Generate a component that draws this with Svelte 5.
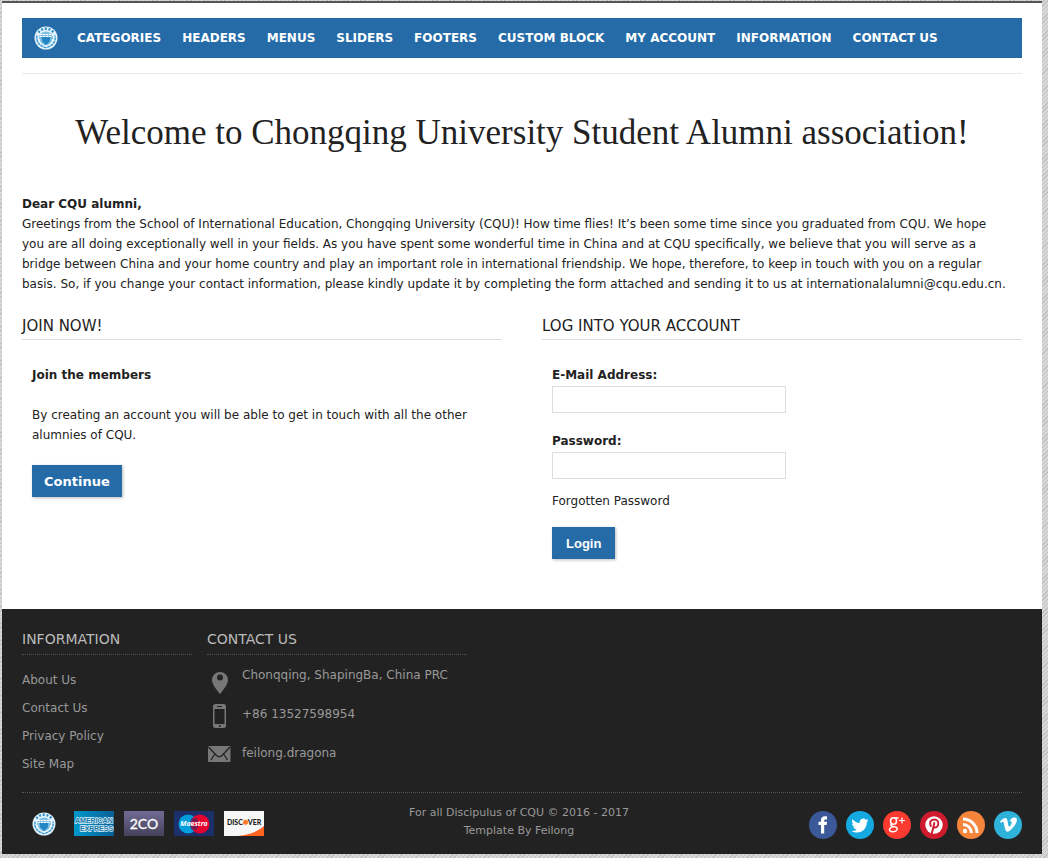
<script>
  const menu = ['Categories', 'Headers', 'Menus', 'Sliders', 'Footers', 'Custom Block', 'My Account', 'Information', 'Contact Us'];
  const links = ['About Us', 'Contact Us', 'Privacy Policy', 'Site Map'];
</script>

{#snippet crest()}
  <svg class="crest" viewBox="0 0 24 24" role="img" aria-label="CQU">
    <circle cx="12" cy="12" r="11.5" fill="#e4f3fb" />
    <path d="M4.500 6.500A9.300 9.300 0 0 1 19.500 6.500" fill="none" stroke="#2c8ecb" stroke-width="2.400" stroke-dasharray="2 1.700" />
    <path d="M3 9.500Q1.500 19 12 21.500Q22.500 19 21 9.500" fill="none" stroke="#3c9bd2" stroke-width="1.500" stroke-dasharray="3 .6" />
    <circle cx="12" cy="12.500" r="7" fill="#7fc0e4" />
    <path d="M6 8.500h12M6 10.500h12" stroke="#fff" stroke-width="1" stroke-dasharray="2.400 .6" />
    <path d="M7.500 11h9l-.8 4.500-3.700 3.500-3.700-3.500z" fill="#2387c5" />
    <path d="M5 13q1 5 7 7.500q6-2.500 7-7.500" fill="none" stroke="#fff" stroke-width="1" />
  </svg>
{/snippet}

<div class="page">
  <header>
    <nav aria-label="Main">
      <a class="home" href="#home">{@render crest()}</a>
      {#each menu as item}
        <a href="#menu">{item}</a>
      {/each}
    </nav>
  </header>

  <main>
    <h1>Welcome to Chongqing University Student Alumni association!</h1>
    <section class="letter">
      <strong>Dear CQU alumni,</strong>
      <p>Greetings from the School of International Education, Chongqing University (CQU)! How time flies! It’s been some time since you graduated from CQU. We hope you are all doing exceptionally well in your fields. As you have spent some wonderful time in China and at CQU specifically, we believe that you will serve as a bridge between China and your home country and play an important role in international friendship. We hope, therefore, to keep in touch with you on a regular basis. So, if you change your contact information, please kindly update it by completing the form attached and sending it to us at internationalalumni@cqu.edu.cn.</p>
    </section>

    <div class="columns">
      <section>
        <h2>Join now!</h2>
        <div class="box">
          <strong>Join the members</strong>
          <p class="about">By creating an account you will be able to get in touch with all the other alumnies of CQU.</p>
          <button type="button" class="continue">Continue</button>
        </div>
      </section>
      <section>
        <h2>Log into your account</h2>
        <form class="box" onsubmit={(e) => e.preventDefault()}>
          <label for="email">E-Mail Address:</label>
          <input id="email" type="email" />
          <label for="password">Password:</label>
          <input id="password" type="password" />
          <a class="forgotten" href="#forgotten">Forgotten Password</a>
          <button type="submit" class="login">Login</button>
        </form>
      </section>
    </div>
  </main>

  <footer>
    <div class="footer-columns">
      <section class="info">
        <h3>Information</h3>
        <ul>
          {#each links as link}
            <li><a href="#info">{link}</a></li>
          {/each}
        </ul>
      </section>
      <section class="contact">
        <h3>Contact Us</h3>
        <ul>
          <li class="address">
            <svg viewBox="0 0 24 24"><path fill-rule="evenodd" d="M13 1a8 8 0 0 0-8 8c0 4 4 9 8 14 4-5 8-10 8-14a8 8 0 0 0-8-8zm0 2.500a3 3 0 1 1 0 6 3 3 0 0 1 0-6z" /></svg>
            <span>Chonqqing, ShapingBa, China PRC</span>
          </li>
          <li>
            <svg viewBox="0 0 24 24"><path fill-rule="evenodd" d="M8.500 0h8a2.500 2.500 0 0 1 2.500 2.500v19a2.500 2.500 0 0 1-2.500 2.500h-8a2.500 2.500 0 0 1-2.500-2.500v-19a2.500 2.500 0 0 1 2.500-2.500zM7.500 5v15h10v-15zM10 2v1h5v-1zM12 21v2h1.500v-2z" /></svg>
            <span>+86 13527598954</span>
          </li>
          <li>
            <svg viewBox="0 0 24 24"><rect x="1" y="3" width="22.500" height="16" rx="1" /><path d="M1.500 4l8 8.500q2.700 2.500 5.500 0L23 4M4 17l3.500-5.500M20.500 17l-3.500-5.500" fill="none" stroke="#222" stroke-width="1.300" /></svg>
            <span>feilong.dragona</span>
          </li>
        </ul>
      </section>
    </div>

    <div class="bottom">
      <div class="payments">
        <span class="seal">{@render crest()}</span>
        <svg viewBox="0 0 40 25" role="img" aria-label="American Express">
          <defs><linearGradient id="amex" x2="1" y2="0"><stop stop-color="#0098cb" /><stop offset="1" stop-color="#075e96" /></linearGradient></defs>
          <rect width="40" height="25" fill="url(#amex)" />
          <g font-family="Liberation Sans" font-weight="700" font-size="7" fill="#1678aa" stroke="#d8edf7" stroke-width="1.400" paint-order="stroke">
            <text x="1" y="12">AMERICAN</text><text x="6" y="20">EXPRESS</text>
          </g>
        </svg>
        <svg viewBox="0 0 40 25" role="img" aria-label="2CO">
          <defs><linearGradient id="co" x2="0" y2="1"><stop stop-color="#716b94" /><stop offset="1" stop-color="#44425b" /></linearGradient></defs>
          <rect width="40" height="25" fill="url(#co)" />
          <text x="20" y="18" text-anchor="middle" font-family="Lato" font-size="14" fill="#fff" stroke="#fff" stroke-width=".3">2CO</text>
        </svg>
        <svg viewBox="0 0 40 25" role="img" aria-label="Maestro">
          <rect width="40" height="25" fill="#1b2f6b" />
          <circle cx="14" cy="13" r="9.500" fill="#009ddc" /><circle cx="26" cy="13" r="9.500" fill="#e4002f" />
          <path d="M17 8h6M16 10h8M16 16h8M17 18h6" stroke="#1b3471" />
          <text x="20" y="15" text-anchor="middle" font-family="Open Sans" font-style="italic" font-weight="700" font-size="7" fill="#fff">Maestro</text>
        </svg>
        <svg viewBox="0 0 40 25" role="img" aria-label="Discover">
          <rect width="40" height="25" fill="#f7f7f7" />
          <path d="M14 25q18-2 26-10v10z" fill="#ff6320" />
          <circle cx="21.500" cy="11.300" r="2.500" fill="#ff7a22" />
          <g font-family="Lato" font-weight="900" font-size="7" fill="#222"><text x="18.800" y="14" text-anchor="end">DISC</text><text x="23.800" y="14">VER</text></g>
        </svg>
      </div>

      <div class="credits">For all Discipulus of CQU © 2016 - 2017<br />Template By Feilong</div>

      <div class="social">
        <a href="#facebook" aria-label="Facebook"><svg viewBox="0 0 28 28"><circle cx="14" cy="14" r="14" fill="#3b5999" /><path fill="#fff" d="M12 22.500v-8.500h-2.500v-3.300h2.500v-1.500c0-3 1.500-4 4-4h2v3.300h-1.300c-1.200 0-1.500.5-1.500 1.300v.9h2.800l-.4 3.300h-2.400v8.500z" /></svg></a>
        <a href="#twitter" aria-label="Twitter"><svg viewBox="0 0 28 28"><circle cx="14" cy="14" r="14" fill="#14a9e0" /><path fill="#fff" d="M22.500 9.300a7 7 0 0 1-2 .5 3.500 3.500 0 0 0 1.500-1.900 7 7 0 0 1-2.200.9 3.500 3.500 0 0 0-6 3.200 10 10 0 0 1-7.200-3.700 3.500 3.500 0 0 0 1.100 4.700 3.500 3.500 0 0 1-1.600-.4 3.500 3.500 0 0 0 2.800 3.500 3.500 3.500 0 0 1-1.600 0 3.500 3.500 0 0 0 3.300 2.400A7 7 0 0 1 5.500 20c8 4.500 15.500-1 15.300-8.900a7 7 0 0 0 1.700-1.800z" /></svg></a>
        <a href="#google" aria-label="Google Plus"><svg viewBox="0 0 28 28"><circle cx="14" cy="14" r="14" fill="#fb3b30" /><g fill="none" stroke="#fff" stroke-width="1.500"><ellipse cx="10.500" cy="10" rx="3" ry="3.300" /><path d="M11.500 6.900h4M8.500 12.800q-2 2 1.500 2.700c4 .4 4.500 1.500 4 3.300-1.200 3-8 2.400-7.500-.4 0-1.700 2-2.400 3.500-2.800" /><path d="M19 6.500v6M16 9.500h6" stroke-width="1.200" /></g></svg></a>
        <a href="#pinterest" aria-label="Pinterest"><svg viewBox="0 0 28 28"><circle cx="14" cy="14" r="14" fill="#cf1b2d" /><circle cx="14" cy="14" r="8.700" fill="#fff" /><path fill="none" stroke="#cf1b2d" stroke-width="1.900" stroke-linecap="round" d="M10.800 15c-2-5 1-6.500 3.700-6.500 5.300 0 4.500 8 .7 8-1.200 0-1.900-.6-1.900-.6M14.300 12l-2.500 10.500" /></svg></a>
        <a href="#rss" aria-label="RSS"><svg viewBox="0 0 28 28"><circle cx="14" cy="14" r="14" fill="#f5853a" /><circle cx="8" cy="20" r="2.200" fill="#fff" /><path d="M6 13.500a8.500 8.500 0 0 1 8.500 8.500M6 8a14 14 0 0 1 14 14" fill="none" stroke="#fff" stroke-width="3" /></svg></a>
        <a href="#vimeo" aria-label="Vimeo"><svg viewBox="0 0 28 28"><circle cx="14" cy="14" r="14" fill="#2fb2d9" /><path fill="#fff" d="M6 10.500C8 8.500 10 7 11.200 7c3.200-.2 2.500 8.500 4 8.800.8 0 2.600-3 2.500-4.300-.1-1.200-1-1.300-2-1 1-3 3-4.200 5-3.900 5.500.8-.4 9.700-5 13.200-2 1.500-3.500 1-4.300-1C10.500 16.500 10 11 9 10.800c-.5-.1-1.300.7-2 1.200z" /></svg></a>
      </div>
    </div>
  </footer>
</div>

<style>
  :global(body) {
    background: #ccc repeating-linear-gradient(135deg, #c0c0c0 0 1px, #d8d8d8 1px 3px);
    font: 12px/20px "DejaVu Sans", Verdana, sans-serif;
    color: #222;
  }
  .page {
    margin: 1px 6px 4px 2px;
    border-top: 2px solid #555;
    background: #fff;
  }
  a { color: inherit; text-decoration: none; }
  h1, h2, h3, p, ul { margin: 0; padding: 0; font-weight: 400; }
  ul { list-style: none; }
  header { margin: 0 20px; padding: 15px 0; border-bottom: 1px solid #eaeaea; }
  nav {
    display: flex;
    align-items: center;
    gap: 21px;
    height: 40px;
    padding-left: 12px;
    background: #256ba8;
    color: #fff;
    font-size: 12px;
    font-weight: 700;
    text-transform: uppercase;
    white-space: nowrap;
  }
  .home { display: flex; margin-right: -2px; }
  .crest { display: block; width: 24px; height: 24px; }
  main { padding: 0 20px 50px; }
  h1 {
    padding: 35px 0 37px;
    font: 35px/48px "Liberation Serif", Georgia, serif;
    text-align: center;
  }
  .letter { padding-right: 16px; }
  .columns { display: grid; grid-template-columns: 1fr 1fr; gap: 40px; margin-top: 22px; }
  h2 {
    font-size: 15px;
    line-height: 20px;
    padding-bottom: 3px;
    border-bottom: 1px solid #ddd;
    text-transform: uppercase;
  }
  .box { display: flex; flex-direction: column; align-items: flex-start; padding: 25px 10px 0; }
  .about { margin: 20px 0; }
  button {
    height: 32px;
    padding: 0 12px;
    border: 0;
    background: #256ba8;
    box-shadow: 1px 1px 3px #0004;
    color: #fff;
    font: 700 13px "DejaVu Sans", Verdana, sans-serif;
  }
  .login { padding: 0 14px; font-family: "Liberation Sans", Arial, sans-serif; }
  label { font-weight: 700; }
  input {
    box-sizing: border-box;
    width: 234px;
    max-width: 100%;
    height: 27px;
    margin: 1px 0 18px;
    padding: 4px;
    border: 1px solid #ddd;
    font: inherit;
  }
  .forgotten { margin: -6px 0 16px; }
  footer { padding: 20px 20px 14px; background: #222; color: #999; }
  .footer-columns { display: flex; gap: 15px; min-height: 163px; }
  .info { width: 170px; }
  .contact { width: 260px; }
  h3 {
    padding-bottom: 5px;
    border-bottom: 1px dotted #555;
    color: #bbb;
    font-size: 14px;
    line-height: 20px;
    text-transform: uppercase;
  }
  .info ul { padding-top: 11px; }
  .info li { line-height: 28px; }
  .contact li { display: flex; gap: 11px; height: 39px; }
  .contact ul { padding-top: 10px; }
  .contact svg { width: 24px; height: 24px; fill: #777; }
  .contact .address svg { margin-top: 6px; }
  .bottom {
    display: grid;
    grid-template-columns: 1fr auto 1fr;
    align-items: start;
    border-top: 1px dotted #555;
    padding-top: 11px;
  }
  .payments { display: flex; align-items: center; gap: 10px; padding: 7px 0 0 10px; }
  .payments > svg { width: 40px; height: 25px; }
  .seal { width: 32px; }
  .credits { padding-right: 6px; font-size: 11px; line-height: 18px; text-align: center; }
  .social { display: flex; justify-content: flex-end; gap: 9px; padding-top: 7px; }
  .social a, .social svg { display: block; width: 28px; height: 28px; }
</style>
